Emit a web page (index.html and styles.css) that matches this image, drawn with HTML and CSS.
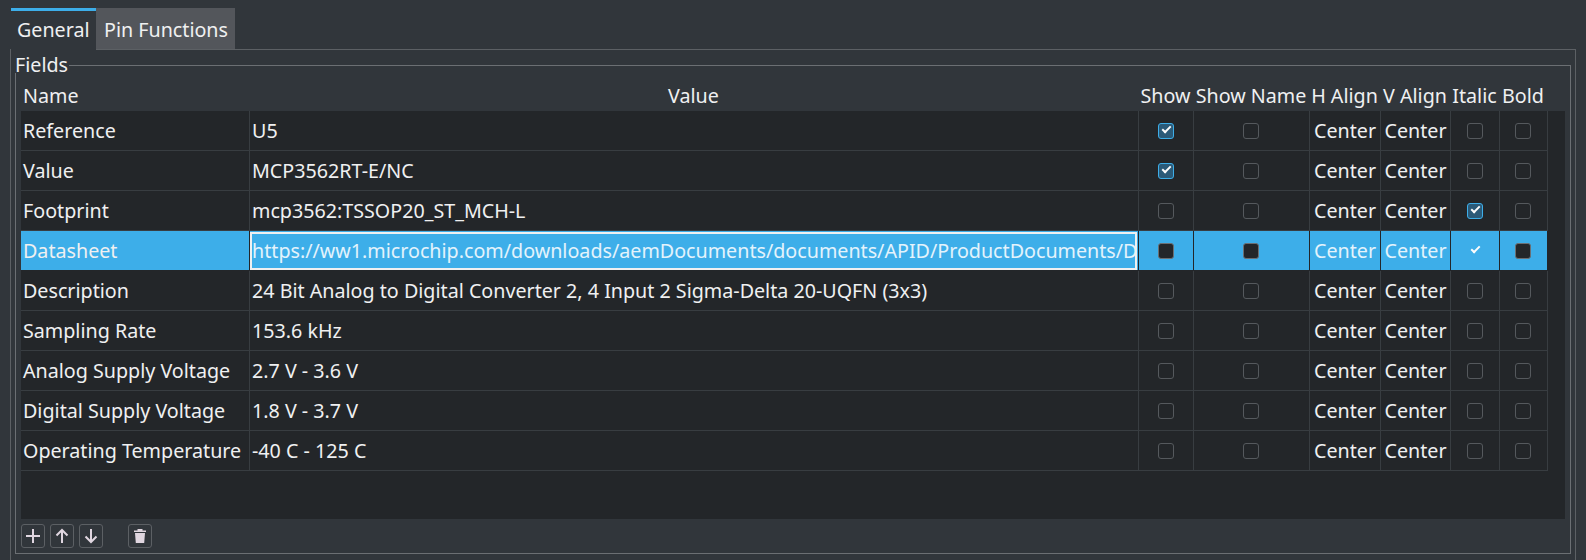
FILE: index.html
```html
<!DOCTYPE html>
<html>
<head>
    <link rel="stylesheet" href="styles.css">
</head>
<body>
    <div class="tabs">
        <div class="tab active">General</div>
        <div class="tab">Pin Functions</div>
    </div>
    <div class="pane">
        <fieldset class="group">
            <legend>Fields</legend>
            <div class="grid-wrap">
                <table class="grid">
                    <colgroup>
                        <col class="c-name"><col class="c-value"><col class="c-show"><col class="c-showname">
                        <col class="c-halign"><col class="c-valign"><col class="c-italic"><col class="c-bold">
                    </colgroup>
                    <thead>
                        <tr>
                            <th class="left">Name</th><th>Value</th><th>Show</th><th>Show Name</th>
                            <th>H Align</th><th>V Align</th><th>Italic</th><th>Bold</th>
                        </tr>
                    </thead>
                    <tbody>
                        <tr>
                            <td>Reference</td><td>U5</td>
                            <td><span class="check on"></span></td><td><span class="check"></span></td>
                            <td>Center</td><td>Center</td>
                            <td><span class="check"></span></td><td><span class="check"></span></td>
                        </tr>
                        <tr>
                            <td>Value</td><td>MCP3562RT-E/NC</td>
                            <td><span class="check on"></span></td><td><span class="check"></span></td>
                            <td>Center</td><td>Center</td>
                            <td><span class="check"></span></td><td><span class="check"></span></td>
                        </tr>
                        <tr>
                            <td>Footprint</td><td>mcp3562:TSSOP20_ST_MCH-L</td>
                            <td><span class="check"></span></td><td><span class="check"></span></td>
                            <td>Center</td><td>Center</td>
                            <td><span class="check on"></span></td><td><span class="check"></span></td>
                        </tr>
                        <tr class="selected">
                            <td>Datasheet</td>
                            <td class="editing"><div class="editor">https://ww1.microchip.com/downloads/aemDocuments/documents/APID/ProductDocuments/D</div></td>
                            <td><span class="check"></span></td><td><span class="check"></span></td>
                            <td>Center</td><td>Center</td>
                            <td><span class="check on"></span></td><td><span class="check"></span></td>
                        </tr>
                        <tr>
                            <td>Description</td><td>24 Bit Analog to Digital Converter 2, 4 Input 2 Sigma-Delta 20-UQFN (3x3)</td>
                            <td><span class="check"></span></td><td><span class="check"></span></td>
                            <td>Center</td><td>Center</td>
                            <td><span class="check"></span></td><td><span class="check"></span></td>
                        </tr>
                        <tr>
                            <td>Sampling Rate</td><td>153.6 kHz</td>
                            <td><span class="check"></span></td><td><span class="check"></span></td>
                            <td>Center</td><td>Center</td>
                            <td><span class="check"></span></td><td><span class="check"></span></td>
                        </tr>
                        <tr>
                            <td>Analog Supply Voltage</td><td>2.7 V - 3.6 V</td>
                            <td><span class="check"></span></td><td><span class="check"></span></td>
                            <td>Center</td><td>Center</td>
                            <td><span class="check"></span></td><td><span class="check"></span></td>
                        </tr>
                        <tr>
                            <td>Digital Supply Voltage</td><td>1.8 V - 3.7 V</td>
                            <td><span class="check"></span></td><td><span class="check"></span></td>
                            <td>Center</td><td>Center</td>
                            <td><span class="check"></span></td><td><span class="check"></span></td>
                        </tr>
                        <tr>
                            <td>Operating Temperature</td><td>-40 C - 125 C</td>
                            <td><span class="check"></span></td><td><span class="check"></span></td>
                            <td>Center</td><td>Center</td>
                            <td><span class="check"></span></td><td><span class="check"></span></td>
                        </tr>
                    </tbody>
                </table>
            </div>
            <div class="toolbar">
                <button class="tool" title="Add">
                    <svg viewBox="0 0 16 16"><path d="M8 1v14M1 8h14"/></svg>
                </button>
                <button class="tool" title="Up">
                    <svg viewBox="0 0 16 16"><path d="M8 15V2M2.5 7.5L8 2l5.5 5.5"/></svg>
                </button>
                <button class="tool" title="Down">
                    <svg viewBox="0 0 16 16"><path d="M8 1v13M2.5 8.5L8 14l5.5-5.5"/></svg>
                </button>
                <button class="tool spaced" title="Delete">
                    <svg viewBox="0 0 16 16"><path class="solid" d="M2 2.5h12V4H2zM5.5 1h5v1.5h-5zM3 5h10l-.8 10H3.8z"/></svg>
                </button>
            </div>
        </fieldset>
    </div>
</body>
</html>
```

FILE: styles.css
```css
html, body {
    height: 100%;
}
body {
    margin: 0;
    overflow: hidden;
    background-color: #31363b;
    color: #eff0f1;
    font-family: "Noto Sans", sans-serif;
    font-size: 19.7px;
}

/* tabs */
.tabs {
    display: flex;
    height: 42px;
    margin: 8px 0 0 11px;
    position: relative;
    z-index: 1;
}
.tab {
    padding: 0 7px 0 8px;
    line-height: 44px;
    background-color: #53565b;
    border-bottom: 1px solid #5c6064;
    box-sizing: border-box;
}
.tab.active {
    width: 85px;
    line-height: 37px;
    padding: 0 0 0 6px;
    background-color: #31363b;
    border-top: 3px solid #3daee9;
    border-bottom: none;
}

.pane {
    box-sizing: border-box;
    margin: -1px 10px 0 10px;
    height: 520px;
    padding: 7px 4px 0 4px;
    border: 1px solid #5c6064;
}

/* group box */
.group {
    margin: 0;
    padding: 8px 4px 0 5px;
    height: 497px;
    box-sizing: border-box;
    border: 1px solid #6b6f73;
}
.group legend {
    padding: 0 1px 0 0;
    margin-left: -6px;
    height: 16px;
    line-height: 16px;
    background-color: #31363b;
}

/* table */
.grid-wrap {
    background: linear-gradient(#31363b 30px, #232629 30px);
    width: 1544px;
    height: 438px;
}
.grid {
    table-layout: fixed;
    width: 1527px;
    border-collapse: separate;
    border-spacing: 0;
}
.c-name { width: 229px; }
.c-value { width: 889px; }
.c-show { width: 55px; }
.c-showname { width: 116px; }
.c-halign { width: 71px; }
.c-valign { width: 70px; }
.c-italic { width: 49px; }
.c-bold { width: 48px; }

.grid th {
    box-sizing: border-box;
    height: 30px;
    padding: 0 2px 2px 0;
    font-weight: normal;
    text-align: center;
    white-space: nowrap;
}
.grid th.left {
    text-align: left;
    padding-left: 2px;
}
.grid td {
    box-sizing: border-box;
    height: 40px;
    padding: 0 2px;
    white-space: nowrap;
    overflow: hidden;
    border-right: 1px solid #383d41;
    border-bottom: 1px solid #383d41;
}
.grid td:nth-child(n+3) {
    text-align: center;
}

.selected td {
    background-color: #3daee9;
    color: #e3f3fc;
    border-right-color: #232629;
    border-bottom-color: #232629;
}
.selected td:first-child {
    color: #eff0f1;
}
.selected td.editing {
    padding: 0;
}
.editor {
    box-sizing: border-box;
    height: 38px;
    line-height: 34px;
    padding: 0;
    margin-right: 1px;
    border: 2px solid #eff0f1;
    overflow: hidden;
    white-space: nowrap;
}

/* checkboxes */
.check {
    display: inline-block;
    box-sizing: border-box;
    width: 16px;
    height: 16px;
    vertical-align: middle;
    border: 1px solid #55595d;
    border-radius: 3px;
    position: relative;
    top: -2px;
}
.grid td:nth-child(4) .check,
.grid td:nth-child(8) .check {
    margin-right: 1px;
}
.check.on {
    background-color: #2b5a78;
    border-color: #3daee9;
}
.check.on::after {
    content: "";
    position: absolute;
    left: 3px;
    top: 2px;
    width: 7px;
    height: 3px;
    border-left: 2px solid #fcfcfc;
    border-bottom: 2px solid #fcfcfc;
    transform: rotate(-45deg);
}
.selected .check {
    background-color: #232629;
    border-color: #6b6f73;
}
.selected .check.on {
    background-color: transparent;
    border-color: transparent;
}

/* toolbar */
.toolbar {
    display: flex;
    gap: 5px;
    margin-top: 5px;
}
.tool {
    box-sizing: border-box;
    width: 24px;
    height: 24px;
    padding: 3px;
    background-color: #31363b;
    border: 1px solid #5c6064;
    border-radius: 3px;
}
.tool.spaced {
    margin-left: 20px;
}
.tool svg {
    display: block;
    width: 16px;
    height: 16px;
    fill: none;
    stroke: #e0d6e0;
    stroke-width: 2;
}
.tool svg .solid {
    fill: #e0d6e0;
    stroke: none;
}
```
